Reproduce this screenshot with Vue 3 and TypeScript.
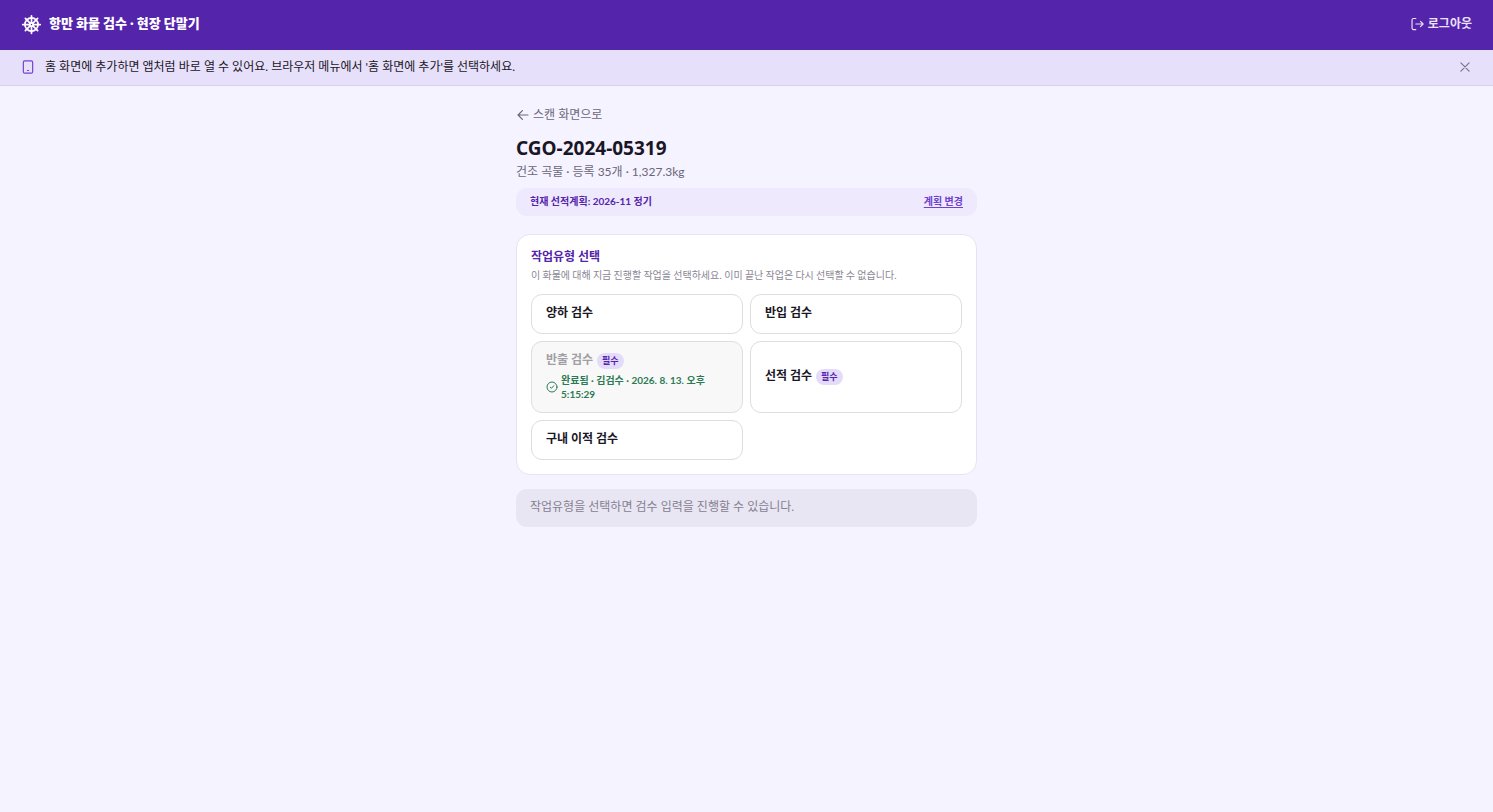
<script setup lang="ts">
import { ref } from 'vue'

interface WorkType {
  id: string
  name: string
  required?: boolean
  completed?: string
}

const cargo = {
  code: 'CGO-2024-05319',
  summary: '건조 곡물 · 등록 35개 · 1,327.3kg',
  plan: '2026-11 정기',
}

const workTypes: WorkType[] = [
  { id: 'unload', name: '양하 검수' },
  { id: 'gate-in', name: '반입 검수' },
  { id: 'gate-out', name: '반출 검수', required: true, completed: '완료됨 · 김검수 · 2026. 8. 13. 오후 5:15:29' },
  { id: 'load', name: '선적 검수', required: true },
  { id: 'shift', name: '구내 이적 검수' },
]

const bannerOpen = ref(true)
</script>

<template>
  <div class="page">
    <header class="topbar">
      <div class="brand">
        <svg class="wheel" viewBox="0 0 24 24" aria-hidden="true">
          <circle cx="12" cy="12" r="7.5" />
          <circle cx="12" cy="12" r="2" />
          <path d="M12 2v8M12 14v8M2 12h8M14 12h8M5 5l5.600 5.600M13.400 13.400L19 19M19 5l-5.600 5.600M10.600 13.400L5 19" />
        </svg>
        <span class="brand-name">항만 화물 검수 · 현장 단말기</span>
      </div>
      <button class="logout" type="button">
        <svg viewBox="0 0 24 24" aria-hidden="true">
          <path d="M10 2.500H6A2.500 2.500 0 0 0 3.500 5v14A2.500 2.500 0 0 0 6 21.500h4M10 12h12.500M18 7.500l4.500 4.500-4.500 4.500" />
        </svg>
        <span>로그아웃</span>
      </button>
    </header>

    <div v-if="bannerOpen" class="banner">
      <svg class="device" viewBox="0 0 24 24" aria-hidden="true">
        <rect x="4" y="1.500" width="16" height="21" rx="2.500" />
        <path d="M11 18h2" />
      </svg>
      <p>홈 화면에 추가하면 앱처럼 바로 열 수 있어요. 브라우저 메뉴에서 '홈 화면에 추가'를 선택하세요.</p>
      <button class="close" type="button" aria-label="닫기" @click="bannerOpen = false">
        <svg viewBox="0 0 24 24" aria-hidden="true"><path d="M5 5l14 14M19 5L5 19" /></svg>
      </button>
    </div>

    <main class="content">
      <a class="back" href="#">
        <svg viewBox="0 0 24 24" aria-hidden="true"><path d="M20.500 12H4M11 4.500L3.500 12l7.500 7.500" /></svg>
        <span>스캔 화면으로</span>
      </a>
      <h1>{{ cargo.code }}</h1>
      <p class="summary">{{ cargo.summary }}</p>

      <div class="plan">
        <span>현재 선적계획: {{ cargo.plan }}</span>
        <button type="button">계획 변경</button>
      </div>

      <section class="card" aria-labelledby="work-title">
        <h2 id="work-title">작업유형 선택</h2>
        <p class="hint">이 화물에 대해 지금 진행할 작업을 선택하세요. 이미 끝난 작업은 다시 선택할 수 없습니다.</p>
        <div class="options">
          <button v-for="type in workTypes" :key="type.id" class="option" type="button" :disabled="!!type.completed">
            <span class="option-head">
              <span class="option-name">{{ type.name }}</span>
              <span v-if="type.required" class="badge">필수</span>
            </span>
            <span v-if="type.completed" class="done">
              <svg viewBox="0 0 24 24" aria-hidden="true">
                <circle cx="12" cy="12" r="10" />
                <path d="M8.500 12.500l2.500 2 4.500-5" />
              </svg>
              <span>{{ type.completed }}</span>
            </span>
          </button>
        </div>
      </section>

      <p class="notice">작업유형을 선택하면 검수 입력을 진행할 수 있습니다.</p>
    </main>
  </div>
</template>

<style>
body {
  margin: 0;
  background: #f5f3ff;
}
</style>

<style scoped>
.page {
  min-height: 100vh;
  background: #f5f3ff;
  color: #1a1625;
  font-family: Lato, "Noto Sans CJK KR", sans-serif;
  font-size: 12px;
  line-height: 18px;
}

h1,
h2,
p {
  margin: 0;
}

button {
  margin: 0;
  padding: 0;
  border: 0;
  background: none;
  color: inherit;
  font: inherit;
  text-align: left;
  cursor: pointer;
}

svg {
  flex: none;
  fill: none;
  stroke: currentColor;
  stroke-width: 2;
  stroke-linecap: round;
  stroke-linejoin: round;
}

.topbar {
  display: flex;
  align-items: center;
  justify-content: space-between;
  height: 50px;
  padding: 0 21px 2px;
  box-sizing: border-box;
  background: #5424ab;
  color: #fff;
}

.brand {
  display: flex;
  align-items: center;
  gap: 7px;
}

.brand-name {
  padding-bottom: 2px;
  font-size: 13px;
  font-weight: 900;
}

.wheel {
  width: 21px;
  height: 21px;
}

.logout {
  display: flex;
  align-items: center;
  gap: 4px;
  color: #ebe1fb;
  font-weight: 700;
}

.logout svg {
  width: 14px;
  height: 14px;
}

.banner {
  display: flex;
  align-items: center;
  height: 36px;
  padding: 0 21px 1px;
  box-sizing: border-box;
  border-bottom: 1px solid #d9d0ef;
  background: #e7e0fa;
}

.banner p {
  flex: 1;
  margin-left: 10px;
}

.device {
  width: 14px;
  height: 14px;
  color: #7040cf;
}

.close {
  display: flex;
  color: #77718a;
}

.close svg {
  width: 14px;
  height: 14px;
}

.content {
  display: flex;
  flex-direction: column;
  max-width: 461px;
  margin: 0 auto;
  padding: 20px 0;
}

.back {
  display: flex;
  align-items: center;
  align-self: flex-start;
  gap: 3px;
  color: #6b6678;
  text-decoration: none;
}

.back svg {
  width: 14px;
  height: 14px;
}

h1 {
  margin-top: 10px;
  font-family: "Noto Sans", sans-serif;
  font-size: 19px;
  font-weight: 700;
  line-height: 28px;
}

.summary {
  margin-top: 1px;
  color: #6b6678;
}

.plan {
  display: flex;
  align-items: center;
  justify-content: space-between;
  margin-top: 7px;
  padding: 4px 14px 6px;
  border-radius: 11px;
  background: #eee9fd;
  color: #5424ab;
  font-size: 10px;
  font-weight: 700;
}

.plan button {
  color: #7040cf;
  text-decoration: underline;
  text-underline-offset: 2px;
}

.card {
  margin-top: 18px;
  padding: 14px;
  border: 1px solid #e7e4f0;
  border-radius: 14px;
  background: #fff;
}

h2 {
  color: #5424ab;
  font-size: 12px;
  font-weight: 700;
  line-height: 16px;
}

.hint {
  margin-top: 1px;
  color: #8b8794;
  font-family: "Noto Sans CJK KR", sans-serif;
  font-size: 10px;
}

.options {
  display: grid;
  grid-template-columns: 1fr 1fr;
  gap: 7px;
  margin-top: 10px;
}

.option {
  display: flex;
  flex-direction: column;
  justify-content: center;
  min-height: 40px;
  padding: 9px 14px 11px;
  border: 1px solid #dedde2;
  border-radius: 11px;
  background: #fff;
}

.option:disabled {
  background: #f8f8f8;
  cursor: default;
}

.option-head {
  display: flex;
  align-items: center;
  gap: 4px;
}

.option-name {
  font-weight: 700;
}

.option:disabled .option-name {
  color: #a09fa3;
}

.badge {
  margin-top: 2px;
  padding: 0 5px;
  border-radius: 8px;
  background: #e4daf9;
  color: #5424ab;
  font-size: 9px;
  font-weight: 700;
  line-height: 16px;
}

.done {
  display: flex;
  align-items: center;
  gap: 3px;
  margin-top: 4px;
  color: #2b7a54;
  font-size: 10px;
  font-weight: 700;
  line-height: 14px;
}

.done svg {
  width: 12px;
  height: 12px;
}

.notice {
  margin-top: 14px;
  padding: 9px 14px 11px;
  border-radius: 11px;
  background: #e9e6f3;
  color: #858091;
}
</style>
